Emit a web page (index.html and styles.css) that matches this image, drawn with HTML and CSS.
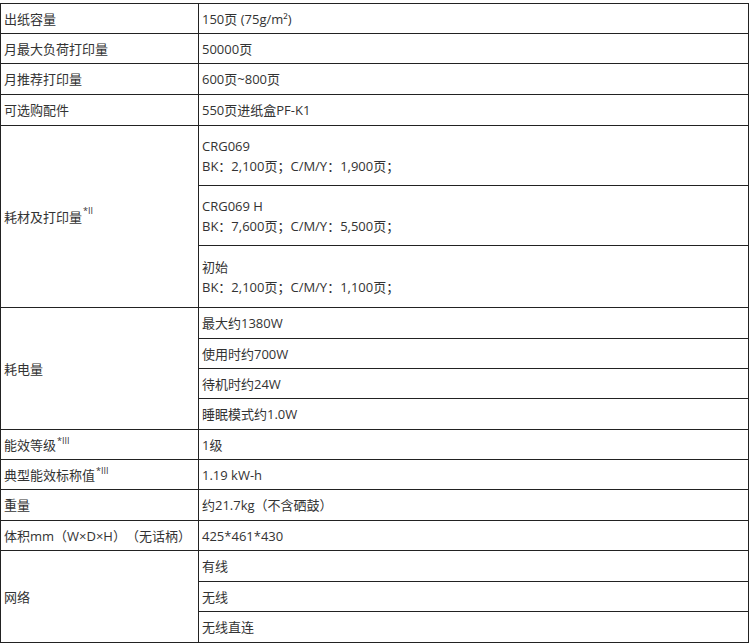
FILE: index.html
```html
<!DOCTYPE html>
<html lang="zh-CN">
<head>
<meta charset="utf-8">
<link rel="stylesheet" href="styles.css">
</head>
<body>
<div class="spec">
  <div class="k r1">出纸容量</div><div class="v">150页 (75g/m²)</div>
  <div class="k r2">月最大负荷打印量</div><div class="v">50000页</div>
  <div class="k r3">月推荐打印量</div><div class="v">600页~800页</div>
  <div class="k r4">可选购配件</div><div class="v">550页进纸盒PF-K1</div>
  <div class="k r5">耗材及打印量<sup>*II</sup></div>
  <div class="v two">CRG069<br>BK：2,100页；C/M/Y：1,900页；</div>
  <div class="v two">CRG069 H<br>BK：7,600页；C/M/Y：5,500页；</div>
  <div class="v two">初始<br>BK：2,100页；C/M/Y：1,100页；</div>
  <div class="k r8">耗电量</div>
  <div class="v">最大约1380W</div>
  <div class="v">使用时约700W</div>
  <div class="v">待机时约24W</div>
  <div class="v">睡眠模式约1.0W</div>
  <div class="k r12">能效等级<sup>*III</sup></div><div class="v">1级</div>
  <div class="k r13">典型能效标称值<sup>*III</sup></div><div class="v">1.19 kW-h</div>
  <div class="k r14">重量</div><div class="v">约21.7kg（不含硒鼓）</div>
  <div class="k r15">体积mm（W×D×H）（无话柄）</div><div class="v">425*461*430</div>
  <div class="k r16">网络</div>
  <div class="v">有线</div>
  <div class="v">无线</div>
  <div class="v">无线直连</div>
</div>
</body>
</html>
```
FILE: styles.css
```css
html, body {
  margin: 0;
  padding: 0;
  background: #fff;
}
body {
  padding-top: 3px;
  font-family: "Open Sans", "Noto Sans CJK SC", sans-serif;
  font-size: 13px;
  color: #333;
  text-spacing-trim: space-all;
}
.spec {
  display: grid;
  width: 748px;
  grid-template-columns: 198px 550px;
  grid-template-rows: 30px 30px 31px 31px 60px 60px 62px 31px 30px 30px 31px 30px 30px 31px 30px 31px 30px 31px;
  border-top: 1px solid #222;
  border-left: 1px solid #222;
}
.k, .v {
  display: flex;
  align-items: center;
  padding-left: 3px;
  border-right: 1px solid #222;
  border-bottom: 1px solid #222;
  white-space: nowrap;
  line-height: 20px;
}
.k { grid-column: 1; }
.v { grid-column: 2; }
.r5 { grid-row: 5 / span 3; }
.r8 { grid-row: 8 / span 4; }
.r16 { grid-row: 16 / span 3; }
sup {
  font-size: 9px;
  line-height: 1;
  align-self: flex-start;
  margin-left: 1px;
}
.r5 sup { margin-top: 80px; }
.r12 sup, .r13 sup { margin-top: 6px; }
```
